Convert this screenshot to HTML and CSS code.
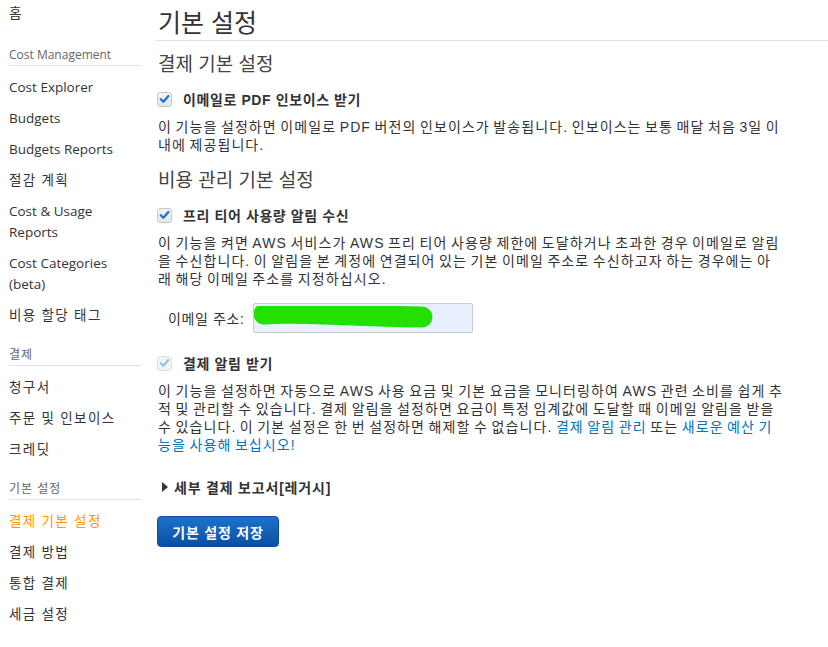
FILE: index.html
```html
<!DOCTYPE html>
<html lang="ko">
<head>
<meta charset="utf-8">
<link rel="stylesheet" href="styles.css">
</head>
<body>
<div class="layout">
  <nav class="sidebar">
    <a class="nav-item home ko">홈</a>
    <div class="nav-group">Cost Management</div>
    <a class="nav-item">Cost Explorer</a>
    <a class="nav-item">Budgets</a>
    <a class="nav-item">Budgets Reports</a>
    <a class="nav-item ko">절감 계획</a>
    <a class="nav-item">Cost &amp; Usage Reports</a>
    <a class="nav-item">Cost Categories (beta)</a>
    <a class="nav-item ko">비용 할당 태그</a>
    <div class="nav-group ko">결제</div>
    <a class="nav-item ko">청구서</a>
    <a class="nav-item ko">주문 및 인보이스</a>
    <a class="nav-item ko">크레딧</a>
    <div class="nav-group ko">기본 설정</div>
    <a class="nav-item ko active">결제 기본 설정</a>
    <a class="nav-item ko">결제 방법</a>
    <a class="nav-item ko">통합 결제</a>
    <a class="nav-item ko">세금 설정</a>
  </nav>
  <main class="main">
    <h1 class="page-title">기본 설정</h1>
    <h2 class="section-title">결제 기본 설정</h2>
    <label class="check-row first">
      <span class="checkbox"><svg viewBox="0 0 14 14" class="tick"><path d="M3 7.2 L5.8 10 L11.2 3.8" /></svg></span>
      <span class="check-label">이메일로 PDF 인보이스 받기</span>
    </label>
    <p class="desc">이 기능을 설정하면 이메일로 PDF 버전의 인보이스가 발송됩니다. 인보이스는 보통 매달 처음 3일 이내에 제공됩니다.</p>

    <h2 class="section-title second">비용 관리 기본 설정</h2>
    <label class="check-row second">
      <span class="checkbox"><svg viewBox="0 0 14 14" class="tick"><path d="M3 7.2 L5.8 10 L11.2 3.8" /></svg></span>
      <span class="check-label">프리 티어 사용량 알림 수신</span>
    </label>
    <p class="desc">이 기능을 켜면 AWS 서비스가 AWS 프리 티어 사용량 제한에 도달하거나 초과한 경우 이메일로 알림을 수신합니다. 이 알림을 본 계정에 연결되어 있는 기본 이메일 주소로 수신하고자 하는 경우에는 아래 해당 이메일 주소를 지정하십시오.</p>
    <div class="email-row">
      <span class="email-label">이메일 주소:</span>
      <span class="email-input"><svg class="scribble" viewBox="0 0 180 24"><path d="M10 8 C40 5, 90 10, 168 11" /></svg></span>
    </div>

    <label class="check-row disabled">
      <span class="checkbox"><svg viewBox="0 0 14 14" class="tick"><path d="M3 7.2 L5.8 10 L11.2 3.8" /></svg></span>
      <span class="check-label">결제 알림 받기</span>
    </label>
    <p class="desc alert-desc">이 기능을 설정하면 자동으로 AWS 사용 요금 및 기본 요금을 모니터링하여 AWS 관련 소비를 쉽게 추적 및 관리할 수 있습니다. 결제 알림을 설정하면 요금이 특정 임계값에 도달할 때 이메일 알림을 받을 수 있습니다. 이 기본 설정은 한 번 설정하면 해제할 수 없습니다. <a class="link">결제 알림 관리</a> 또는 <a class="link">새로운 예산 기능을 사용해 보십시오!</a></p>

    <div class="expander"><span class="caret"></span>세부 결제 보고서[레거시]</div>

    <button class="save-btn">기본 설정 저장</button>
  </main>
</div>
</body>
</html>
```
FILE: styles.css
```css
html, body {
  margin: 0;
  padding: 0;
  background: #fff;
}
body {
  font-family: "Liberation Sans", "Noto Sans CJK KR", sans-serif;
  color: #333;
  font-size: 14px;
}
.layout {
  display: flex;
  align-items: flex-start;
}
.sidebar {
  width: 132px;
  margin-left: 9px;
  flex-shrink: 0;
  display: flex;
  flex-direction: column;
  font-family: "Open Sans", "Noto Sans CJK KR", sans-serif;
  font-size: 13.5px;
  padding-top: 3px;
}
.nav-item {
  display: block;
  color: #333;
  line-height: 21px;
  padding: 0 0 10px 0;
}
.ko { letter-spacing: 1.4px; }
.nav-item.home { padding-bottom: 22px; }
.nav-item.active { color: #ff9900; }
.nav-group {
  color: #666;
  font-size: 12px;
  line-height: 17px;
  padding-bottom: 2px;
  border-bottom: 1px solid #e1e1e1;
  margin-bottom: 11px;
  margin-top: 0;
}
.nav-group.ko { letter-spacing: 1px; }
.nav-item + .nav-group { margin-top: 10px; }
.nav-item.home + .nav-group { margin-top: 0; }

.main {
  flex: 1;
  margin-left: 15px;
}
.page-title {
  font-size: 25px;
  font-weight: normal;
  margin: 0;
  padding: 9px 0 2px 2px;
  line-height: 29px;
  border-bottom: 1px solid #e1e1e1;
  color: #333;
}
.section-title {
  font-size: 19px;
  font-weight: normal;
  margin: 11px 0 0 2px;
  line-height: 26px;
  color: #444;
}
.section-title.second { margin-top: 14px; }
.check-row {
  display: flex;
  align-items: center;
  margin: 13px 0 0 1px;
  height: 16px;
}
.check-row.second { margin-top: 13px; }
.checkbox {
  border: 1px solid #c8c8c8;
  border-radius: 3px;
  background: linear-gradient(#f4f4f4, #e6e6e6);
  display: inline-flex;
  align-items: center;
  justify-content: center;
  box-sizing: border-box;
  width: 15px;
  height: 15px;
}
.tick {
  width: 14px;
  height: 14px;
}
.tick path {
  fill: none;
  stroke: #1673d0;
  stroke-width: 2.4;
  stroke-linecap: round;
  stroke-linejoin: round;
}
.check-label {
  font-weight: bold;
  margin-left: 11px;
  color: #333;
  letter-spacing: 0.6px;
}
.disabled .checkbox { border-color: #e0e0e0; background: #f4f4f4; }
.disabled .tick path { stroke: #8cc2ea; }
.desc {
  margin: 11px 0 0 2px;
  line-height: 18px;
  max-width: 624.5px;
  color: #333;
  letter-spacing: 1.1px;
  word-spacing: -1.5px;
}
.desc.alert-desc { max-width: 626.8px; }
.email-row {
  display: flex;
  align-items: center;
  margin: 15px 0 0 12px;
}
.email-label {
  width: 85px;
  letter-spacing: 0.6px;
}
.email-input {
  width: 220px;
  height: 30px;
  box-sizing: border-box;
  border: 1px solid #ccc;
  border-radius: 2px;
  background: #e8f0fe;
  display: block;
  position: relative;
}
.scribble {
  position: absolute;
  left: 0;
  top: 2px;
  width: 180px;
  height: 24px;
}
.scribble path {
  fill: none;
  stroke: #22e100;
  stroke-width: 21;
  stroke-linecap: round;
}
.check-row.disabled { margin-top: 22px; }
.link { color: #0073bb; text-decoration: none; }
.expander {
  margin: 23px 0 0 6px;
  font-weight: bold;
  display: flex;
  align-items: center;
  letter-spacing: 0.8px;
}
.caret {
  width: 0;
  height: 0;
  border-top: 5px solid transparent;
  border-bottom: 5px solid transparent;
  border-left: 6px solid #333;
  margin-right: 6px;
}
.save-btn {
  margin: 19px 0 0 1px;
  width: 122px;
  height: 31px;
  border: 1px solid #0d4f98;
  border-radius: 4px;
  background: linear-gradient(#1c73cc, #0a4fa3);
  color: #fff;
  font-family: "Liberation Sans", "Noto Sans CJK KR", sans-serif;
  font-weight: bold;
  font-size: 14px;
  letter-spacing: 0.8px;
  padding: 0;
}
```
